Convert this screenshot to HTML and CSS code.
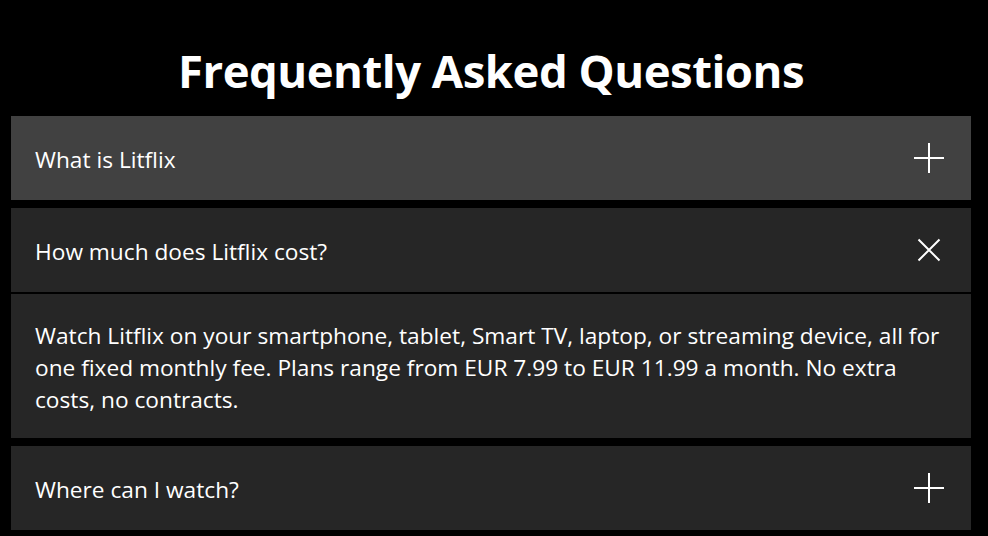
FILE: index.html
```html
<!DOCTYPE html>
<html lang="en">
<head>
<meta charset="utf-8">
<title>FAQ</title>
<link rel="stylesheet" href="styles.css">
</head>
<body>
<section class="faq">
  <h1 class="faq-title">Frequently Asked Questions</h1>
  <ul class="faq-list">
    <li class="faq-item">
      <div class="faq-question is-hover">
        <span class="faq-text">What is Litflix</span>
        <svg class="icon" width="32" height="32" viewBox="0 0 32 32"><path d="M16 1v30M1 16h30" stroke="#fff" stroke-width="2" fill="none"/></svg>
      </div>
    </li>
    <li class="faq-item">
      <div class="faq-question">
        <span class="faq-text">How much does Litflix cost?</span>
        <svg class="icon" width="32" height="32" viewBox="0 0 32 32"><path d="M5.5 5.5l21 21M26.5 5.5l-21 21" stroke="#fff" stroke-width="2" fill="none"/></svg>
      </div>
      <div class="faq-answer">Watch Litflix on your smartphone, tablet, Smart TV, laptop, or streaming device, all for one fixed monthly fee. Plans range from EUR 7.99 to EUR 11.99 a month. No extra costs, no contracts.</div>
    </li>
    <li class="faq-item">
      <div class="faq-question">
        <span class="faq-text">Where can I watch?</span>
        <svg class="icon" width="32" height="32" viewBox="0 0 32 32"><path d="M16 1v30M1 16h30" stroke="#fff" stroke-width="2" fill="none"/></svg>
      </div>
    </li>
  </ul>
</section>
</body>
</html>
```

FILE: styles.css
```css
html, body {
  margin: 0;
  padding: 0;
  background: #000;
  color: #fff;
  font-family: "Open Sans", "Noto Sans", sans-serif;
}
.faq {
  padding: 0 17px 0 11px;
}
.faq-title {
  margin: 0 0 18px;
  padding-top: 42px;
  text-align: center;
  font-size: 45.5px;
  line-height: 56px;
  font-weight: 700;
  letter-spacing: -0.5px;
}
.faq-list {
  list-style: none;
  margin: 0;
  padding: 0;
  display: flex;
  flex-direction: column;
  gap: 8px;
}
.faq-item {
  display: flex;
  flex-direction: column;
  gap: 2px;
}
.faq-question {
  background: #262626;
  height: 84px;
  box-sizing: border-box;
  padding: 0 26px 0 24px;
  display: flex;
  align-items: center;
  justify-content: space-between;
  font-size: 22.7px;
}
.faq-text {
  padding-top: 2px;
}
.faq-question.is-hover {
  background: #414141;
}
.faq-answer {
  background: #262626;
  padding: 26px 24px 22px;
  font-size: 22.7px;
  line-height: 32px;
}
.icon {
  display: block;
}
```
